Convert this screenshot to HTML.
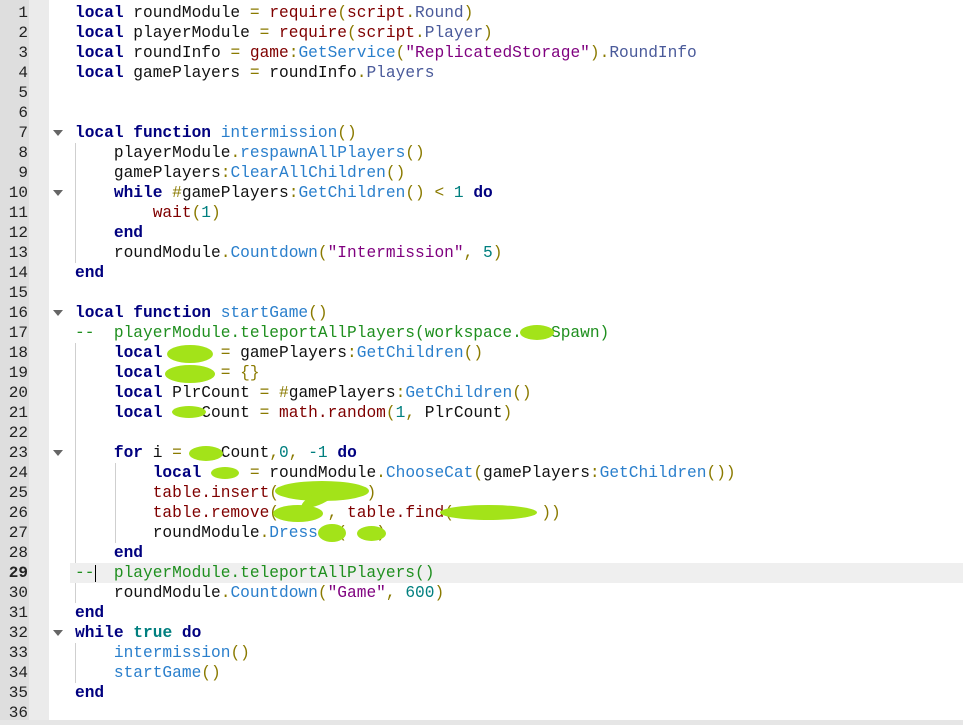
<!DOCTYPE html>
<html><head><meta charset="utf-8"><style>
html,body{margin:0;padding:0;width:963px;height:725px;overflow:hidden;background:#fff;}
.g1{position:absolute;left:0;top:0;width:29px;height:725px;background:#dedede;}
.g2{position:absolute;left:29px;top:0;width:20px;height:725px;background:#ebebeb;}
.nums{position:absolute;left:0;top:3px;width:28px;text-align:right;font:16px/20px "Liberation Mono",monospace;color:#222;}
.hl{position:absolute;left:70px;top:563px;width:893px;height:20px;background:#efefef;}
pre{position:absolute;left:75px;top:3px;margin:0;font:16.2px/20px "Liberation Mono",monospace;color:#111;}
.k{color:#00007f;font-weight:bold}
.o{color:#8a7a00}
.r{color:#7f0000}
.s{color:#7f007f}
.n{color:#007f7f}
.m{color:#2a7fcc}
.p{color:#4a5a9a}
.c{color:#1f8f1f}
.t{color:#007f7f;font-weight:bold}
.guide{position:absolute;width:1px;background:#cfcfcf;}
.fold{position:absolute;left:53px;width:0;height:0;border-left:5px solid transparent;border-right:5px solid transparent;border-top:6px solid #666;}
.sc{position:absolute;background:#a3e319;border-radius:50%;}
.bot{position:absolute;left:0;top:720px;width:963px;height:5px;background:#e6e6e6;}
</style></head><body>
<div class="g1"></div><div class="g2"></div>
<div class="hl"></div>
<div class="nums">1<br>2<br>3<br>4<br>5<br>6<br>7<br>8<br>9<br>10<br>11<br>12<br>13<br>14<br>15<br>16<br>17<br>18<br>19<br>20<br>21<br>22<br>23<br>24<br>25<br>26<br>27<br>28<br><b>29</b><br>30<br>31<br>32<br>33<br>34<br>35<br>36</div>
<div class="fold" style="top:130px"></div>
<div class="fold" style="top:190px"></div>
<div class="fold" style="top:310px"></div>
<div class="fold" style="top:450px"></div>
<div class="fold" style="top:630px"></div>
<div class="guide" style="left:75px;top:143px;height:120px"></div>
<div class="guide" style="left:75px;top:343px;height:220px"></div>
<div class="guide" style="left:75px;top:583px;height:20px"></div>
<div class="guide" style="left:115px;top:463px;height:80px"></div>
<div class="guide" style="left:75px;top:643px;height:40px"></div>
<div class="guide" style="left:95px;top:565px;height:17px;background:#000"></div>
<pre><span class="k">local</span> roundModule <span class="o">=</span> <span class="r">require</span><span class="o">(</span><span class="r">script</span><span class="o">.</span><span class="p">Round</span><span class="o">)</span>
<span class="k">local</span> playerModule <span class="o">=</span> <span class="r">require</span><span class="o">(</span><span class="r">script</span><span class="o">.</span><span class="p">Player</span><span class="o">)</span>
<span class="k">local</span> roundInfo <span class="o">=</span> <span class="r">game</span><span class="o">:</span><span class="m">GetService</span><span class="o">(</span><span class="s">"ReplicatedStorage"</span><span class="o">).</span><span class="p">RoundInfo</span>
<span class="k">local</span> gamePlayers <span class="o">=</span> roundInfo<span class="o">.</span><span class="p">Players</span>


<span class="k">local function</span> <span class="m">intermission</span><span class="o">()</span>
    playerModule<span class="o">.</span><span class="m">respawnAllPlayers</span><span class="o">()</span>
    gamePlayers<span class="o">:</span><span class="m">ClearAllChildren</span><span class="o">()</span>
    <span class="k">while</span> <span class="o">#</span>gamePlayers<span class="o">:</span><span class="m">GetChildren</span><span class="o">()</span> <span class="o">&lt;</span> <span class="n">1</span> <span class="k">do</span>
        <span class="r">wait</span><span class="o">(</span><span class="n">1</span><span class="o">)</span>
    <span class="k">end</span>
    roundModule<span class="o">.</span><span class="m">Countdown</span><span class="o">(</span><span class="s">"Intermission"</span><span class="o">,</span> <span class="n">5</span><span class="o">)</span>
<span class="k">end</span>

<span class="k">local function</span> <span class="m">startGame</span><span class="o">()</span>
<span class="c">--  playerModule.teleportAllPlayers(workspace.   Spawn)</span>
    <span class="k">local</span>      <span class="o">=</span> gamePlayers<span class="o">:</span><span class="m">GetChildren</span><span class="o">()</span>
    <span class="k">local</span>      <span class="o">= {}</span>
    <span class="k">local</span> PlrCount <span class="o">=</span> <span class="o">#</span>gamePlayers<span class="o">:</span><span class="m">GetChildren</span><span class="o">()</span>
    <span class="k">local</span>    Count <span class="o">=</span> <span class="r">math.random</span><span class="o">(</span><span class="n">1</span><span class="o">,</span> PlrCount<span class="o">)</span>

    <span class="k">for</span> i <span class="o">=</span>    Count<span class="o">,</span><span class="n">0</span><span class="o">,</span> <span class="n">-1</span> <span class="k">do</span>
        <span class="k">local</span>     <span class="o">=</span> roundModule<span class="o">.</span><span class="m">ChooseCat</span><span class="o">(</span>gamePlayers<span class="o">:</span><span class="m">GetChildren</span><span class="o">())</span>
        <span class="r">table.insert</span><span class="o">(</span>         <span class="o">)</span>
        <span class="r">table.remove</span><span class="o">(</span>     <span class="o">,</span> <span class="r">table.find</span><span class="o">(</span>         <span class="o">))</span>
        roundModule<span class="o">.</span><span class="m">Dress</span>  <span class="o">(</span>   <span class="o">)</span>
    <span class="k">end</span>
<span class="c">--  playerModule.teleportAllPlayers()</span>
    roundModule<span class="o">.</span><span class="m">Countdown</span><span class="o">(</span><span class="s">"Game"</span><span class="o">,</span> <span class="n">600</span><span class="o">)</span>
<span class="k">end</span>
<span class="k">while</span> <span class="t">true</span> <span class="k">do</span>
    <span class="m">intermission</span><span class="o">()</span>
    <span class="m">startGame</span><span class="o">()</span>
<span class="k">end</span>
</pre>
<div class="sc" style="left:520px;top:325px;width:34px;height:15px"></div>
<div class="sc" style="left:167px;top:345px;width:46px;height:18px"></div>
<div class="sc" style="left:165px;top:365px;width:50px;height:18px"></div>
<div class="sc" style="left:172px;top:406px;width:34px;height:12px"></div>
<div class="sc" style="left:189px;top:446px;width:34px;height:15px"></div>
<div class="sc" style="left:211px;top:467px;width:28px;height:12px"></div>
<div class="sc" style="left:275px;top:481px;width:94px;height:20px"></div>
<div class="sc" style="left:300px;top:492px;width:40px;height:12px;transform:rotate(-25deg)"></div>
<div class="sc" style="left:273px;top:505px;width:50px;height:17px"></div>
<div class="sc" style="left:440px;top:505px;width:97px;height:15px"></div>
<div class="sc" style="left:318px;top:524px;width:28px;height:18px"></div>
<div class="sc" style="left:357px;top:526px;width:29px;height:15px"></div>
<div class="bot"></div>
</body></html>
